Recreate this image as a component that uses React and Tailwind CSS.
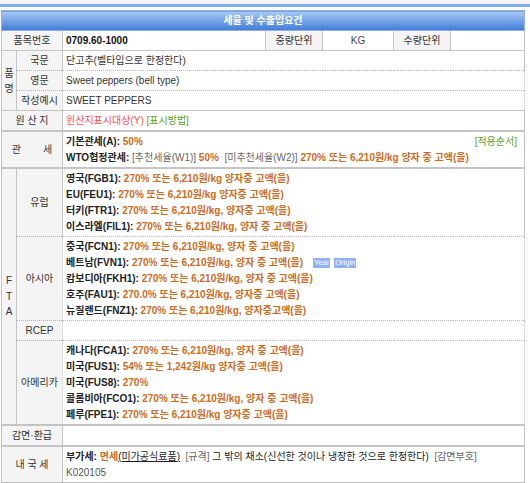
import React from "react";

const B = "border border-[#c4c4c4]";
const LBL = "bg-[#f4f4f4] text-[#333] text-center align-middle";
const CELL = "px-[3px] py-[1.5px] align-middle";
const DOT = "border-t border-dotted border-t-[#b5b5b5]";

function Line({ name, rest, badge }) {
  return (
    <div className="h-[16px] leading-[16px] whitespace-nowrap flex items-center">
      <span className="font-bold text-[#222]">{name}</span>
      <span className="text-[#cc6a1c] font-semibold">&nbsp;{rest}</span>
      {badge && (
        <span className="flex items-center gap-[4px] ml-[10px]">
          <span className="bg-[#8fb3f2] text-white text-[7.5px] leading-[10px] px-[1px]">Year</span>
          <span className="bg-[#8fb3f2] text-white text-[7.5px] leading-[10px] px-[1px]">Origin</span>
        </span>
      )}
    </div>
  );
}

export default function App() {
  return (
    <div
      className="w-[530px] h-[483px] bg-white overflow-hidden text-[10px] leading-[16px] text-[#333]"
      style={{ fontFamily: '"Liberation Sans", "Noto Sans CJK KR", sans-serif' }}
    >
      <div className="h-[4px] bg-[#f3f3f3]" />
      <div className="h-[3px] bg-[#7eaef2]" />
      <div className="h-[3px] bg-white" />
      <div className="pl-[1px]">
        <table className="border-collapse table-fixed w-[523px] border-b-[3px] border-b-[#bdbdbd]">
          <colgroup>
            <col className="w-[15px]" />
            <col className="w-[46px]" />
            <col className="w-[203px]" />
            <col className="w-[57px]" />
            <col className="w-[71px]" />
            <col className="w-[57px]" />
            <col className="w-[74px]" />
          </colgroup>
          <tbody>
            <tr>
              <td
                colSpan={7}
                className="h-[20px] text-center text-white font-bold bg-gradient-to-b from-[#aacaf4] to-[#3f7bd8] border border-[#8fb0e0]"
              >
                세율 및 수출입요건
              </td>
            </tr>
            <tr>
              <td colSpan={2} className={`${B} ${LBL} ${CELL}`}>품목번호</td>
              <td className={`${B} ${CELL} font-bold text-[#111]`}>0709.60-1000</td>
              <td className={`${B} ${LBL} ${CELL}`}>중량단위</td>
              <td className={`${B} ${CELL} text-center text-[#444]`}>KG</td>
              <td className={`${B} ${LBL} ${CELL}`}>수량단위</td>
              <td className={`${B} ${CELL}`}></td>
            </tr>
            <tr>
              <td rowSpan={3} className={`${B} ${LBL} p-0 leading-[15px]`}>
                품<br />명
              </td>
              <td className={`${B} ${LBL} ${CELL} border-b-0`}>국문</td>
              <td colSpan={5} className={`${B} ${CELL} border-b-0`}>단고추(벨타입으로 한정한다)</td>
            </tr>
            <tr>
              <td className={`border-x border-x-[#c4c4c4] ${DOT} ${LBL} ${CELL}`}>영문</td>
              <td colSpan={5} className={`border-x border-x-[#c4c4c4] ${DOT} ${CELL}`}>Sweet peppers (bell type)</td>
            </tr>
            <tr>
              <td className={`border-x border-b border-x-[#c4c4c4] border-b-[#c4c4c4] ${DOT} ${LBL} ${CELL}`}>작성예시</td>
              <td colSpan={5} className={`border-x border-b border-x-[#c4c4c4] border-b-[#c4c4c4] ${DOT} ${CELL}`}>SWEET PEPPERS</td>
            </tr>
            <tr>
              <td colSpan={2} className={`${B} ${LBL} ${CELL}`}>원 산 지</td>
              <td colSpan={5} className={`${B} ${CELL}`}>
                <span className="text-[#ff4d4d]">원산지표시대상(Y)</span>{" "}
                <span className="text-[#5f9e2c]">[표시방법]</span>
              </td>
            </tr>
            <tr>
              <td colSpan={2} className={`${B} border-t-2 ${LBL} ${CELL}`}>
                <div className="flex justify-center gap-[22px]">
                  <span>관</span>
                  <span>세</span>
                </div>
              </td>
              <td colSpan={5} className={`${B} border-t-2 ${CELL}`}>
                <div className="h-[16px] flex justify-between whitespace-nowrap">
                  <span>
                    <span className="font-bold text-[#222]">기본관세(A):</span>
                    <span className="text-[#cc6a1c] font-semibold"> 50%</span>
                  </span>
                  <span className="text-[#5f9e2c] pr-[4px]">[적용순서]</span>
                </div>
                <div className="h-[16px] whitespace-nowrap">
                  <span className="font-bold text-[#222]">WTO협정관세:</span>
                  <span className="text-[#666]"> [추천세율(W1)]</span>
                  <span className="text-[#cc6a1c] font-semibold"> 50%</span>
                  <span className="text-[#666]">&nbsp;&nbsp;[미추천세율(W2)]</span>
                  <span className="text-[#cc6a1c] font-semibold"> 270% 또는 6,210원/kg 양자 중 고액(을)</span>
                </div>
              </td>
            </tr>
            <tr>
              <td rowSpan={4} className={`${B} border-t-2 ${LBL} p-0 leading-[15.5px]`}>
                F<br />T<br />A
              </td>
              <td className={`${B} border-t-2 border-b-0 ${LBL} ${CELL}`}>유럽</td>
              <td colSpan={5} className={`${B} border-t-2 border-b-0 ${CELL}`}>
                <Line name="영국(FGB1):" rest="270% 또는 6,210원/kg 양자중 고액(을)" />
                <Line name="EU(FEU1):" rest="270% 또는 6,210원/kg 양자중 고액(을)" />
                <Line name="터키(FTR1):" rest="270% 또는 6,210원/kg, 양자중 고액(을)" />
                <Line name="이스라엘(FIL1):" rest="270% 또는 6,210원/kg, 양자 중 고액(을)" />
              </td>
            </tr>
            <tr>
              <td className={`border-x border-x-[#c4c4c4] ${DOT} ${LBL} ${CELL}`}>아시아</td>
              <td colSpan={5} className={`border-x border-x-[#c4c4c4] ${DOT} ${CELL}`}>
                <Line name="중국(FCN1):" rest="270% 또는 6,210원/kg, 양자 중 고액(을)" />
                <Line name="베트남(FVN1):" rest="270% 또는 6,210원/kg, 양자 중 고액(을)" badge />
                <Line name="캄보디아(FKH1):" rest="270% 또는 6,210원/kg, 양자 중 고액(을)" />
                <Line name="호주(FAU1):" rest="270.0% 또는 6,210원/kg, 양자중 고액(을)" />
                <Line name="뉴질랜드(FNZ1):" rest="270% 또는 6,210원/kg, 양자중고액(을)" />
              </td>
            </tr>
            <tr>
              <td className={`border-x border-x-[#c4c4c4] ${DOT} ${LBL} ${CELL}`}>RCEP</td>
              <td colSpan={5} className={`border-x border-x-[#c4c4c4] ${DOT} ${CELL}`}>
                <div className="h-[16px]" />
              </td>
            </tr>
            <tr>
              <td className={`border-x border-b border-x-[#c4c4c4] border-b-[#c4c4c4] ${DOT} ${LBL} ${CELL}`}>아메리카</td>
              <td colSpan={5} className={`border-x border-b border-x-[#c4c4c4] border-b-[#c4c4c4] ${DOT} ${CELL}`}>
                <Line name="캐나다(FCA1):" rest="270% 또는 6,210원/kg, 양자 중 고액(을)" />
                <Line name="미국(FUS1):" rest="54% 또는 1,242원/kg 양자중 고액(을)" />
                <Line name="미국(FUS8):" rest="270%" />
                <Line name="콜롬비아(FCO1):" rest="270% 또는 6,210원/kg, 양자 중 고액(을)" />
                <Line name="페루(FPE1):" rest="270% 또는 6,210원/kg 양자중 고액(을)" />
              </td>
            </tr>
            <tr>
              <td colSpan={2} className={`${B} border-t-2 ${LBL} ${CELL}`}>감면·환급</td>
              <td colSpan={5} className={`${B} border-t-2 ${CELL}`}>
                <div className="h-[16px]" />
              </td>
            </tr>
            <tr>
              <td colSpan={2} className={`${B} border-t-2 ${LBL} ${CELL}`}>내 국 세</td>
              <td colSpan={5} className={`${B} border-t-2 ${CELL}`}>
                <div className="h-[16px] whitespace-nowrap">
                  <span className="font-bold text-[#222]">부가세:</span>
                  <span className="text-[#cc6a1c] font-semibold"> 면세</span>
                  <span className="underline text-[#222]">(미가공식료품)</span>
                  <span className="text-[#666]">&nbsp;&nbsp;[규격]</span>
                  <span className="text-[#222]"> 그 밖의 채소(신선한 것이나 냉장한 것으로 한정한다)</span>
                  <span className="text-[#666]">&nbsp;&nbsp;[감면부호]</span>
                </div>
                <div className="h-[16px] text-[#555]">K020105</div>
              </td>
            </tr>
          </tbody>
        </table>
      </div>
    </div>
  );
}
